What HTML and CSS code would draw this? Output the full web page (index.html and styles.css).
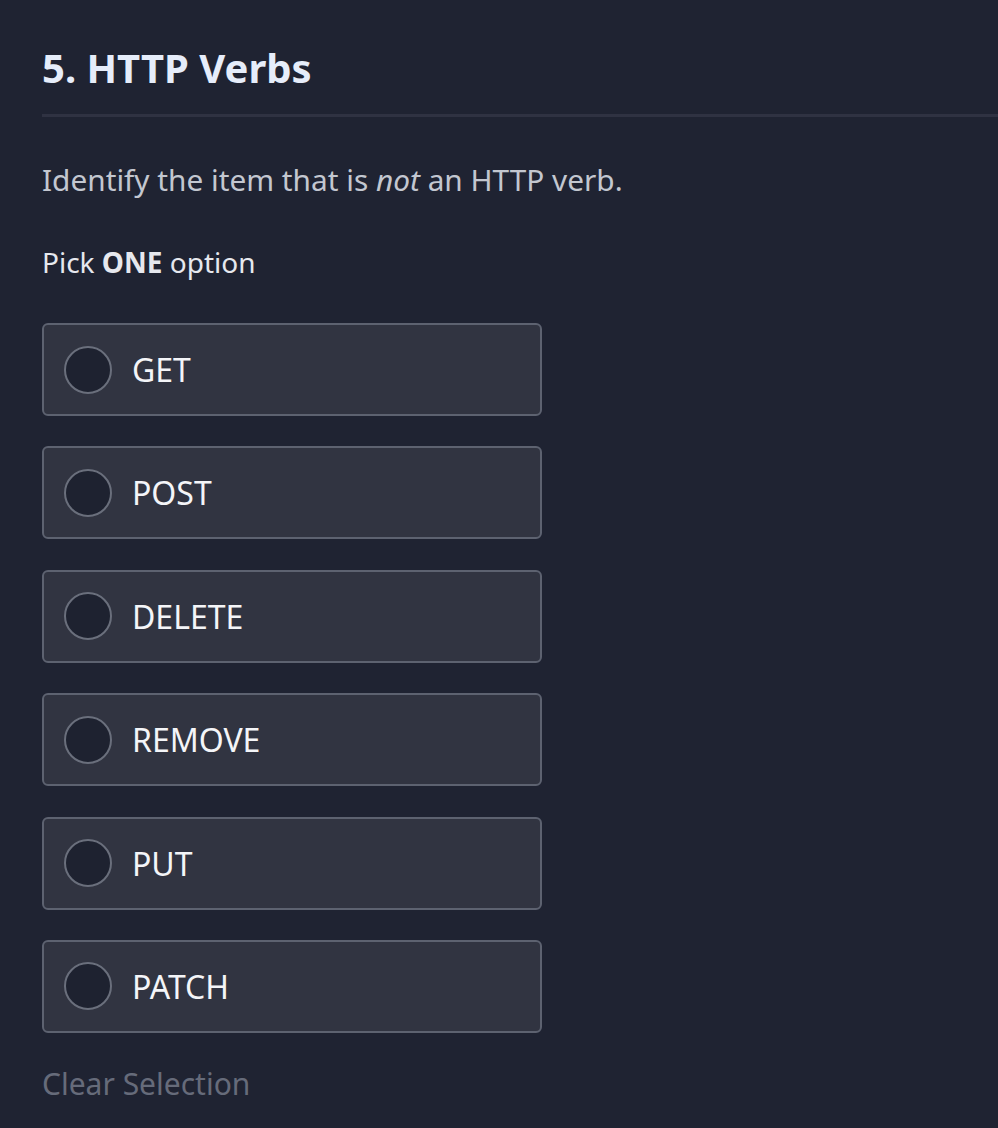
FILE: index.html
```html
<!DOCTYPE html>
<html>
<head>
<meta charset="utf-8">
<link rel="stylesheet" href="styles.css">
</head>
<body>
<div class="page">
  <h1 class="title">5. HTTP Verbs</h1>
  <div class="rule"></div>
  <p class="question">Identify the item that is <em>not</em> an HTTP verb.</p>
  <p class="pick">Pick <strong>ONE</strong> option</p>
  <div class="options">
    <label class="option"><span class="radio"></span><span class="label">GET</span></label>
    <label class="option"><span class="radio"></span><span class="label">POST</span></label>
    <label class="option"><span class="radio"></span><span class="label">DELETE</span></label>
    <label class="option"><span class="radio"></span><span class="label">REMOVE</span></label>
    <label class="option"><span class="radio"></span><span class="label">PUT</span></label>
    <label class="option"><span class="radio"></span><span class="label">PATCH</span></label>
  </div>
  <div class="clear">Clear Selection</div>
</div>
</body>
</html>
```
FILE: styles.css
```css
html, body {
  margin: 0;
  padding: 0;
  background: #1f2332;
}
body {
  font-family: "Noto Sans", "Open Sans", sans-serif;
  color: #c9ccd4;
}
.page {
  padding: 40px 0 0 42px;
}
.title {
  margin: 0;
  font-size: 40px;
  font-weight: 700;
  color: #e6edfa;
  line-height: 56px;
}
.rule {
  height: 3px;
  background: #2f3242;
  margin-top: 18px;
}
.question {
  margin: 43px 0 0;
  font-size: 29.8px;
  line-height: 40px;
  color: #c3c7d0;
}
.question em {
  font-style: italic;
}
.pick {
  margin: 42px 0 0;
  font-size: 28px;
  line-height: 40px;
  color: #e6e8ee;
}
.pick strong {
  font-weight: 700;
}
.options {
  margin-top: 41px;
  display: flex;
  flex-direction: column;
  gap: 30.4px;
  width: 500px;
}
.option {
  display: flex;
  align-items: center;
  height: 93px;
  box-sizing: border-box;
  border: 2px solid #5d6270;
  border-radius: 6px;
  background: #313441;
  padding-left: 20px;
}
.radio {
  width: 48px;
  height: 48px;
  box-sizing: border-box;
  border: 2px solid #6a6f7c;
  border-radius: 50%;
  background: #1e2230;
  flex: none;
}
.label {
  margin-left: 20px;
  font-size: 32px;
  color: #f4f5f8;
}
.clear {
  margin-top: 31px;
  font-size: 30px;
  line-height: 40px;
  color: #666b7a;
}
```
